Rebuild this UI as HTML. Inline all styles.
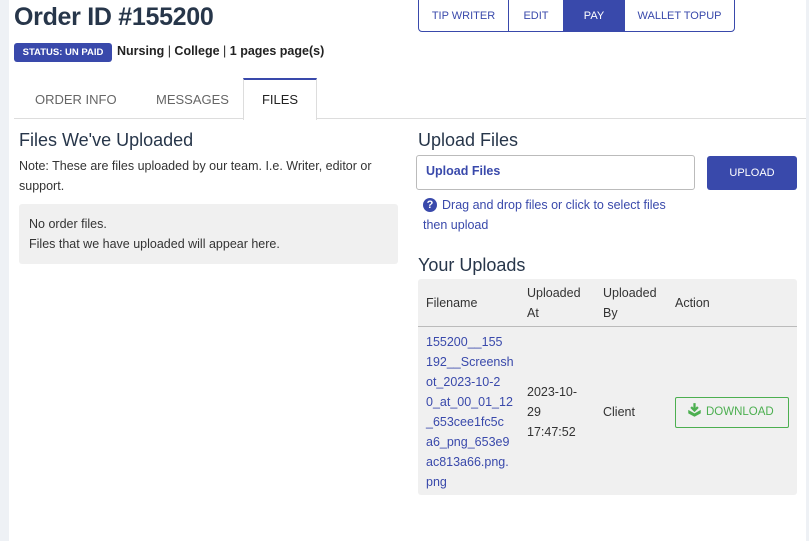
<!DOCTYPE html>
<html><head><style>
*{box-sizing:border-box;margin:0;padding:0}
body{width:809px;height:541px;background:#fff;font-family:"Liberation Sans",sans-serif;color:#333;position:relative;overflow:hidden}
.a{position:absolute;white-space:nowrap}
.navy{color:#27364a}
</style></head><body>
<div class="a" style="left:0;top:0;width:9px;height:541px;background:#eef1f5"></div>
<div class="a navy" style="left:14px;top:3px;font-size:25px;font-weight:bold;letter-spacing:-0.3px">Order ID #155200</div>
<div class="a" style="left:14px;top:43px;width:98px;height:19px;background:#3949ab;border-radius:3px;color:#fff;font-size:9.5px;font-weight:bold;line-height:19px;text-align:center">STATUS: UN PAID</div>
<div class="a" style="left:117px;top:44px;font-size:12.5px;font-weight:bold;color:#222">Nursing <span style="font-weight:normal">|</span> College <span style="font-weight:normal">|</span> 1 pages page(s)</div>
<div class="a" style="left:418px;top:-2px;width:317px;height:34px;border:1px solid #3949ab;border-radius:0 0 4px 4px;display:flex;font-size:11px;color:#3949ab;overflow:hidden">
<div style="width:90px;border-right:1px solid #3949ab;text-align:center;line-height:34px">TIP WRITER</div>
<div style="width:54px;text-align:center;line-height:34px">EDIT</div>
<div style="width:62px;background:#3949ab;color:#fff;text-align:center;line-height:34px">PAY</div>
<div style="flex:1;text-align:center;line-height:34px">WALLET TOPUP</div>
</div>
<div class="a" style="left:14px;top:118px;width:792px;height:1px;background:#ddd"></div>
<div class="a" style="left:35px;top:92px;font-size:13px;color:#666">ORDER INFO</div>
<div class="a" style="left:156px;top:92px;font-size:13px;color:#666">MESSAGES</div>
<div class="a" style="left:243px;top:78px;width:74px;height:42px;background:#fff;border:1px solid #ddd;border-bottom:none;border-top:2px solid #3949ab;font-size:13px;color:#222;text-align:center;line-height:40px">FILES</div>
<div class="a navy" style="left:19px;top:130px;font-size:18px">Files We've Uploaded</div>
<div class="a" style="left:19px;top:156px;font-size:12.5px;line-height:20px;color:#333;white-space:normal;width:380px">Note: These are files uploaded by our team. I.e. Writer, editor or support.</div>
<div class="a" style="left:19px;top:204px;width:379px;height:60px;background:#f0f0f0;border-radius:3px;padding:10px;font-size:12.5px;line-height:20px;color:#333">No order files.<br>Files that we have uploaded will appear here.</div>
<div class="a navy" style="left:418px;top:130px;font-size:18px">Upload Files</div>
<div class="a" style="left:416px;top:155px;width:279px;height:35px;border:1px solid #bbb;border-radius:3px;padding:8px 9px;font-size:12.5px;font-weight:bold;color:#3949ab">Upload Files</div>
<div class="a" style="left:707px;top:156px;width:90px;height:34px;background:#3949ab;border-radius:3px;color:#fff;font-size:11px;text-align:center;line-height:34px">UPLOAD</div>
<div class="a" style="left:423px;top:198px;width:14px;height:14px;border-radius:50%;background:#3949ab;color:#fff;font-size:11px;font-weight:bold;text-align:center;line-height:14px">?</div>
<div class="a" style="left:423px;top:195px;font-size:12.5px;line-height:20px;color:#3949ab;text-indent:19px;white-space:normal;width:260px">Drag and drop files or click to select files then upload</div>
<div class="a navy" style="left:418px;top:255px;font-size:18px">Your Uploads</div>
<div class="a" style="left:418px;top:279px;width:379px;height:216px;background:#f0f0f0;border-radius:3px;font-size:12.5px;line-height:20px;color:#333;overflow:hidden">
<div class="a" style="left:0;top:47px;width:379px;height:1px;background:#bbb"></div>
<div class="a" style="left:8px;top:14px">Filename</div>
<div class="a" style="left:109px;top:4px">Uploaded<br>At</div>
<div class="a" style="left:185px;top:4px">Uploaded<br>By</div>
<div class="a" style="left:257px;top:14px">Action</div>
<div class="a" style="left:8px;top:53px;color:#3949ab">155200__155<br>192__Screensh<br>ot_2023-10-2<br>0_at_00_01_12<br>_653cee1fc5c<br>a6_png_653e9<br>ac813a66.png.<br>png</div>
<div class="a" style="left:109px;top:103px">2023-10-<br>29<br>17:47:52</div>
<div class="a" style="left:185px;top:123px">Client</div>
<div class="a" style="left:257px;top:118px;width:114px;height:31px;border:1px solid #4caf50;border-radius:2px;color:#4caf50;font-size:11.5px;line-height:29px;padding-left:10px">
<svg width="17" height="15" viewBox="0 0 15 13" style="vertical-align:-3px;margin-right:3px"><path d="M7.5 0v6M4.5 3.5l3 3 3-3" stroke="#4caf50" stroke-width="2" fill="none"/><path d="M2 6l5.5 3 5.5-3v3l-5.5 3-5.5-3z" fill="#4caf50"/></svg>DOWNLOAD</div>
</div>
<div class="a" style="left:806px;top:0;width:3px;height:541px;background:#eef1f5"></div>
</body></html>
